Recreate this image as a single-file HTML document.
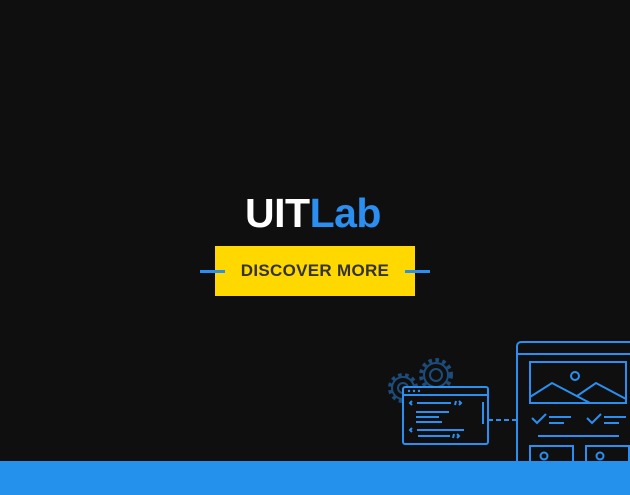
<!DOCTYPE html>
<html><head><meta charset="utf-8"><style>
html,body{margin:0;padding:0}
body{width:630px;height:495px;background:#0f0f0f;position:relative;overflow:hidden;font-family:"Liberation Sans",sans-serif}
.t{position:absolute;left:0;width:630px;top:190px;text-align:center;font-size:41px;font-weight:bold;color:#fff;letter-spacing:-0.5px;padding-right:4px;box-sizing:border-box}
.t span{color:#2a8ff0}
.b{position:absolute;left:215px;top:246px;width:200px;height:50px;background:#ffd800;color:#333;font-weight:bold;font-size:17px;letter-spacing:0.3px;text-align:center;line-height:50px}
.l{position:absolute;top:270px;height:3px;width:25px;background:#2a8ff0}
.bar{position:absolute;left:0;top:461px;width:630px;height:34px;background:#2491ec}
svg{position:absolute;left:0;top:0}
</style></head><body>
<div class="t">UIT<span>Lab</span></div>
<div class="b">DISCOVER MORE</div>
<div class="l" style="left:200px"></div>
<div class="l" style="left:405px"></div>
<svg width="630" height="495" fill="none" stroke-width="2">
<g stroke="#1d4c7a">
<circle cx="436" cy="375" r="12"/><circle cx="436" cy="375" r="6"/>
<circle cx="403" cy="388" r="11"/><circle cx="403" cy="388" r="5"/>
<g stroke-dasharray="3.5 3.5" stroke-width="4"><circle cx="436" cy="375" r="15"/><circle cx="403" cy="388" r="13"/></g>
</g>
<g stroke="#2a8ff0">
<rect x="403" y="387" width="85" height="57" rx="2" fill="#0f0f0f"/>
<line x1="403" y1="395" x2="488" y2="395"/>
<path d="M412 401l-2 2 2 2M417 403h34M456 401l-1 4M459 401l2 2-2 2"/>
<path d="M416 412h33M416 417h23M416 422h26"/>
<path d="M412 428l-2 2 2 2M417 430h47M418 436h32M454 434l-1 4M457 434l2 2-2 2"/>
<line x1="483" y1="402" x2="483" y2="424"/>
<line x1="488" y1="420" x2="517" y2="420" stroke-dasharray="5 3"/>
<path d="M517 461V346a4 4 0 0 1 4-4H632M517 354H632"/>
<rect x="530" y="362" width="96" height="41"/>
<circle cx="575" cy="376" r="4"/>
<path d="M530 397l22-14 38 20M577 396l19-13 30 16"/>
<path d="M532 418l5 5 9-9M549 417h22M549 423h15M587 418l5 5 9-9M604 417h22M604 423h15"/>
<line x1="538" y1="436" x2="619" y2="436"/>
<rect x="530" y="446" width="43" height="20"/><circle cx="544" cy="456" r="3.5"/>
<rect x="586" y="446" width="43" height="20"/><circle cx="600" cy="456" r="3.5"/>
</g>
<g fill="#2a8ff0"><circle cx="409" cy="391" r="1.2"/><circle cx="414" cy="391" r="1.2"/><circle cx="419" cy="391" r="1.2"/></g>
</svg>
<div class="bar"></div>
</body></html>
